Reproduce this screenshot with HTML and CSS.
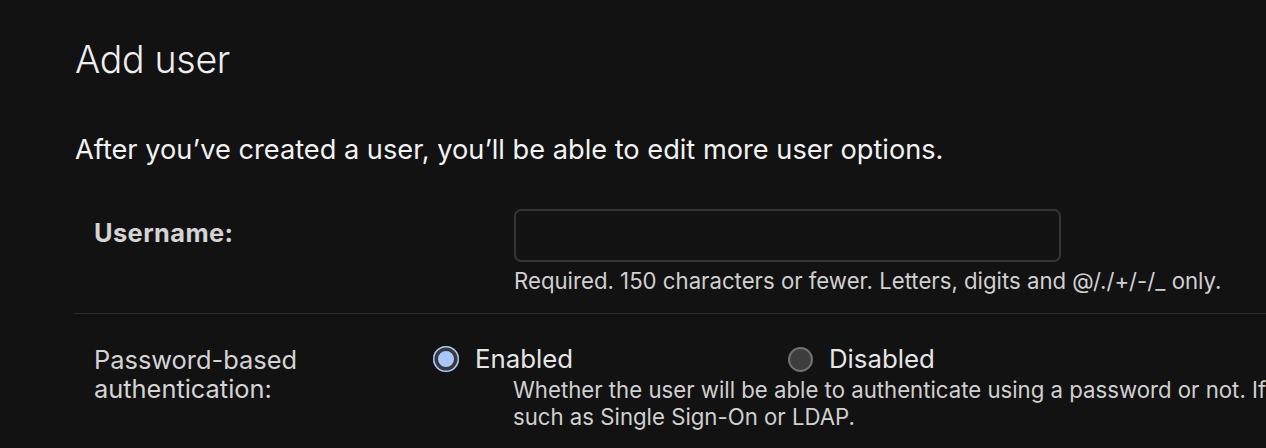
FILE: index.html
```html
<!DOCTYPE html>
<html lang="en">
<head>
<meta charset="utf-8">
<title>Add user</title>
<link rel="stylesheet" href="styles.css">
</head>
<body>
<div class="page">
  <h1 class="title">Add user</h1>
  <p class="intro">After you’ve created a user, you’ll be able to edit more user options.</p>
  <div class="form-row first">
    <label class="label required" for="id_username">Username:</label>
    <div class="field">
      <input class="text-input" type="text" id="id_username">
      <div class="help">Required. 150 characters or fewer. Letters, digits and @/./+/-/_ only.</div>
    </div>
  </div>
  <div class="form-row second">
    <div class="label">Password-based<br>authentication:</div>
    <div class="field-wide">
      <div class="radios">
        <div class="radio-item enabled-item"><span class="radio on"></span><span class="radio-text">Enabled</span></div>
        <div class="radio-item"><span class="radio off"></span><span class="radio-text">Disabled</span></div>
      </div>
      <div class="help help-wide">Whether the user will be able to authenticate using a password or not. If disabled, they may still be able to authenticate using other backends,<br>such as Single Sign-On or LDAP.</div>
    </div>
  </div>
</div>
</body>
</html>
```

FILE: styles.css
```css
html, body {
  margin: 0;
  padding: 0;
  background: #121212;
  overflow: hidden;
}
body {
  font-family: Inter, "Noto Sans", "Liberation Sans", sans-serif;
  color: #eeeeee;
}
.page {
  width: 1600px;
  padding: 36px 0 0 75px;
}
.title {
  margin: 0;
  font-weight: 300;
  font-size: 37.5px;
  line-height: 48px;
  color: #eeeeee;
  letter-spacing: -0.3px;
}
.intro {
  margin: 50px 0 0 0;
  font-size: 27.2px;
  line-height: 32px;
  color: #f2f2f2;
}
.form-row {
  display: flex;
  padding-left: 20px;
  margin-left: -1px;
}
.form-row.first {
  margin-top: 43px;
  padding-bottom: 19px;
  border-bottom: 1px solid #2c2c2c;
}
.form-row.second {
  padding-top: 30px;
}
.label {
  font-size: 25.4px;
  line-height: 29px;
  color: #d4d4d4;
  flex: 0 0 auto;
}
.form-row.first .label {
  width: 420px;
  padding-top: 9px;
}
.form-row.second .label {
  width: 339px;
  padding-top: 1px;
}
.required {
  font-weight: 700;
  letter-spacing: 0.4px;
}
.field {
  display: flex;
  flex-direction: column;
}
.text-input {
  width: 547px;
  height: 53px;
  box-sizing: border-box;
  margin: 0;
  background: #121212;
  border: 2px solid #353535;
  border-radius: 7px;
  color: #eeeeee;
  font: inherit;
}
.help {
  margin-top: 5px;
  font-size: 22.2px;
  line-height: 27px;
  color: #d0d0d0;
  white-space: nowrap;
}
.field-wide {
  display: flex;
  flex-direction: column;
}
.radios {
  display: flex;
  align-items: center;
  height: 30px;
}
.radio-item {
  display: flex;
  align-items: center;
}
.enabled-item {
  width: 355px;
}
.radio {
  display: inline-block;
  box-sizing: border-box;
  width: 26px;
  height: 26px;
  border-radius: 50%;
  flex: 0 0 auto;
}
.radio.on {
  background: #a8c7fa;
  box-shadow: inset 0 0 0 1.5px #a8c7fa, inset 0 0 0 5px #3a3a3a;
  border: 0;
}
.radio.off {
  background: #3d3d3d;
  border: 2px solid #727272;
  width: 25px;
  height: 25px;
}
.radio-text {
  margin-left: 16px;
  font-size: 25.8px;
  line-height: 30px;
  color: #e6e6e6;
}
.help-wide {
  margin-top: 2px;
  margin-left: 80px;
}
```
